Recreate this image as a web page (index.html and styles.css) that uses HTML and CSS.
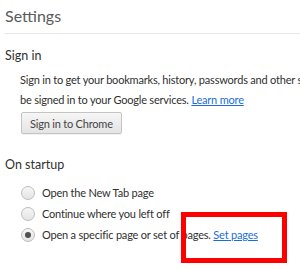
FILE: index.html
```html
<!DOCTYPE html>
<html lang="en">

<head>
    <meta charset="UTF-8">
    <title>Settings</title>
    <link rel="stylesheet" href="styles.css">
</head>

<body>
    <div class="page">
        <header class="page-header">
            <h1>Settings</h1>
        </header>

        <section class="settings-section">
            <h3>Sign in</h3>
            <div class="section-body">
                <p class="sync-text">
                    Sign in to get your bookmarks, history, passwords and other settings on all your devices. You'll also automatically<br>
                    be signed in to your Google services. <a href="#">Learn more</a>
                </p>
                <button class="btn">Sign in to Chrome</button>
            </div>
        </section>

        <section class="settings-section">
            <h3>On startup</h3>
            <div class="section-body radio-list">
                <label class="radio-row"><span class="radio"></span><span>Open the New Tab page</span></label>
                <label class="radio-row"><span class="radio"></span><span>Continue where you left off</span></label>
                <label class="radio-row"><span class="radio checked"></span><span>Open a specific page or set of pages. <a href="#">Set pages</a></span></label>
            </div>
        </section>
    </div>

    <div class="highlight"></div>
</body>

</html>
```

FILE: styles.css
```css
body {
    margin: 0;
    padding: 0;
    background-color: white;
    font-family: 'Lato', 'Noto Sans', sans-serif;
    font-size: 11px;
    letter-spacing: -0.2px;
    color: #303030;
    overflow: hidden;
    position: relative;
    height: 269px;
}

.page {
    padding-left: 5px;
}

.page-header {
    border-bottom: 1px solid #e6e6e6;
    padding-top: 5px;
    height: 28px;
}

.page-header h1 {
    margin: 0;
    font-size: 16px;
    font-weight: normal;
    letter-spacing: 0;
    color: #5a5a5a;
    line-height: 22px;
}

.settings-section h3 {
    margin: 0;
    font-size: 12.5px;
    font-weight: normal;
    letter-spacing: 0;
    color: #303030;
    line-height: 18px;
}

.settings-section:first-of-type {
    margin-top: 13px;
}

.section-body {
    padding-left: 15px;
}

.sync-text {
    margin: 5px 0 2px 0;
    line-height: 20px;
    white-space: nowrap;
}

a {
    color: #1a6ed8;
    text-decoration: underline;
}

.btn {
    font-family: inherit;
    font-size: 11px;
    letter-spacing: inherit;
    color: #444;
    background: linear-gradient(#f6f6f6, #e4e4e4);
    border: 1px solid #c4c4c4;
    border-radius: 2px;
    padding: 0 8px;
    height: 22px;
    margin-left: 1px;
    box-shadow: 0 1px 0 rgba(0, 0, 0, 0.05);
}

.settings-section + .settings-section {
    margin-top: 22px;
}

.radio-list {
    padding-top: 8px;
}

.radio-row {
    display: flex;
    align-items: center;
    gap: 7px;
    height: 21px;
    white-space: nowrap;
}

.radio {
    width: 12px;
    height: 12px;
    border: 1px solid #bdbdbd;
    border-radius: 50%;
    background: linear-gradient(#f6f6f6, #e4e4e4);
    margin-left: 1px;
    position: relative;
    flex-shrink: 0;
}

.radio.checked::after {
    content: '';
    position: absolute;
    left: 3px;
    top: 3px;
    width: 6px;
    height: 6px;
    border-radius: 50%;
    background: #505050;
}

.highlight {
    position: absolute;
    left: 181px;
    top: 212px;
    width: 96px;
    height: 41px;
    border: 5px solid #ff0000;
}
```
